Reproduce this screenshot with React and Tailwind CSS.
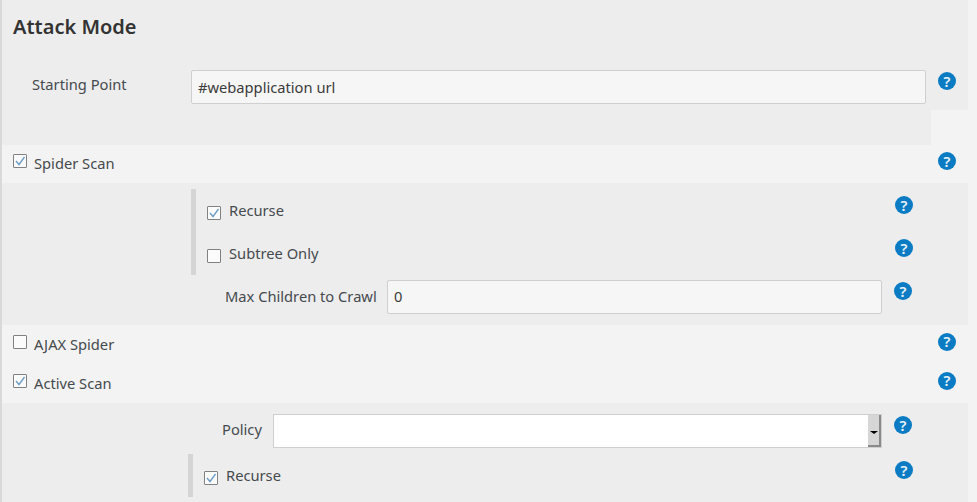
import React from "react";

function Help({ className = "" }) {
  return (
    <span className={"flex h-[18px] w-[18px] shrink-0 items-center justify-center rounded-full bg-[#0b7cc4] font-['Noto_Sans',sans-serif] text-[15px] leading-none font-semibold text-[#e8f2fa] " + className}>
      ?
    </span>
  );
}

function Check({ checked }) {
  return (
    <span className="flex h-[14px] w-[14px] shrink-0 items-center justify-center rounded-[1px] border border-[#7f8183] bg-[#fbfbfb]">
      {checked && (
        <svg width="12" height="12" viewBox="0 0 12 12" fill="none">
          <path d="M2 6 L5 9.5 L10.5 2" stroke="#6f9fc6" strokeWidth="1.4" />
        </svg>
      )}
    </span>
  );
}

function TopRow({ label, checked, height = "h-[39px]", helpOffset = "-mt-[6px]" }) {
  return (
    <div className={"flex items-center pr-[21px] pl-[11px] " + height}>
      <span className="-mt-[5px]"><Check checked={checked} /></span>
      <span className="ml-[7px] grow">{label}</span>
      <Help className={helpOffset} />
    </div>
  );
}

function Input({ value, className = "" }) {
  return (
    <div className={"flex h-[34px] items-center rounded-[2px] border border-[#cfcfcf] bg-[#f6f6f6] pl-[6px] text-[#3b3b3b] " + className}>
      {value}
    </div>
  );
}

function NestedRow({ label, checked }) {
  return (
    <div className="flex h-[43px] items-center pl-[11px]">
      <span className="mt-[4px]"><Check checked={checked} /></span>
      <span className="ml-[8px] grow -mt-[1px]">{label}</span>
      <Help className="-mt-[11px]" />
    </div>
  );
}

export default function App() {
  return (
    <div className="h-[502px] w-[977px] overflow-hidden border-l-2 border-[#d9d9d9] bg-[#f3f3f3] font-['Noto_Sans',sans-serif] text-[14.7px] text-[#454a4d]">
      <div className="mr-[9px] h-[110px] bg-[#ededed]">
        <h1 className="pt-[13px] pl-[11px] text-[20px] leading-[28px] font-semibold text-[#333]">Attack Mode</h1>
        <div className="mt-[29px] flex items-start">
          <span className="mt-[3px] w-[189px] pl-[30px]">Starting Point</span>
          <Input value="#webapplication url" className="w-[735px] pt-[1px]" />
          <Help className="mt-[2px] ml-[12px]" />
        </div>
      </div>
      <div className="mr-[46px] h-[35px] bg-[#ededed]" />

      <div className="h-[38px]"><TopRow label="Spider Scan" checked height="h-[36px]" helpOffset="-mt-[4px]" /></div>

      <div className="mr-[9px] h-[142px] bg-[#ededed] pt-[6px]">
        <div className="ml-[189px] w-[722px] border-l-[5px] border-[#d5d5d5]">
          <NestedRow label="Recurse" checked />
          <NestedRow label="Subtree Only" />
        </div>
        <div className="mt-[5px] flex items-start">
          <span className="mt-[5px] w-[385px] pl-[223px]">Max Children to Crawl</span>
          <Input value="0" className="w-[495px] pb-[1px]" />
          <Help className="mt-[2px] ml-[12px]" />
        </div>
      </div>

      <TopRow label="AJAX Spider" />
      <TopRow label="Active Scan" checked />

      <div className="mr-[9px] h-[99px] bg-[#ededed] pt-[11px]">
        <div className="flex items-start">
          <span className="mt-[4px] w-[271px] pl-[220px]">Policy</span>
          <div className="flex h-[34px] w-[609px] justify-end border border-[#cfcfcf] bg-white">
            <div className="flex w-[13px] items-center justify-center border-r-2 border-b-2 border-[#8a8a8a] bg-[#d6d6d6]">
              <span className="mt-[5px] h-0 w-0 border-x-[4px] border-t-[3px] border-x-transparent border-t-black" />
            </div>
          </div>
          <Help className="mt-[2px] ml-[12px]" />
        </div>
        <div className="mt-[6px] ml-[186px] w-[725px] border-l-[5px] border-[#d5d5d5]">
          <NestedRow label="Recurse" checked />
        </div>
      </div>
    </div>
  );
}
